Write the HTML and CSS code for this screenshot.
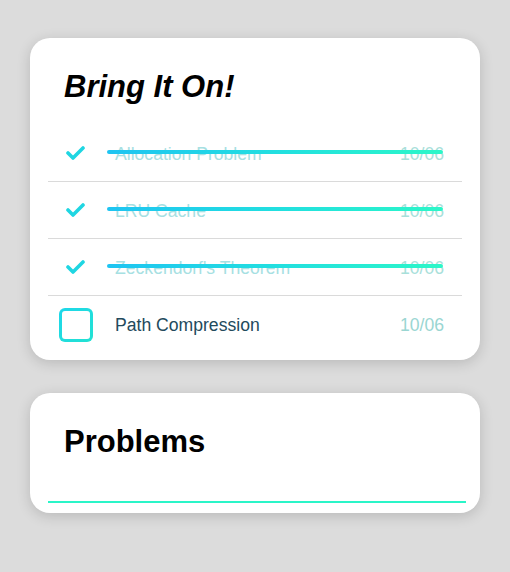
FILE: index.html
```html
<!DOCTYPE html>
<html>
<head>
<meta charset="utf-8">
<link rel="stylesheet" href="styles.css">
</head>
<body>
<div class="page">
  <section class="card todo">
    <h1 class="title">Bring It On!</h1>
    <ul class="list">
      <li class="row done">
        <span class="mark"><svg width="20" height="16" viewBox="0 0 20 16"><polyline points="2,8 7,13 17,3" fill="none" stroke="#1fd6e2" stroke-width="3.6" stroke-linecap="round" stroke-linejoin="round"/></svg></span>
        <span class="name">Allocation Problem</span>
        <span class="date">10/06</span>
        <span class="strike"></span>
      </li>
      <li class="row done">
        <span class="mark"><svg width="20" height="16" viewBox="0 0 20 16"><polyline points="2,8 7,13 17,3" fill="none" stroke="#1fd6e2" stroke-width="3.6" stroke-linecap="round" stroke-linejoin="round"/></svg></span>
        <span class="name">LRU Cache</span>
        <span class="date">10/06</span>
        <span class="strike"></span>
      </li>
      <li class="row done">
        <span class="mark"><svg width="20" height="16" viewBox="0 0 20 16"><polyline points="2,8 7,13 17,3" fill="none" stroke="#1fd6e2" stroke-width="3.6" stroke-linecap="round" stroke-linejoin="round"/></svg></span>
        <span class="name">Zeckendorf's Theorem</span>
        <span class="date">10/06</span>
        <span class="strike"></span>
      </li>
      <li class="row">
        <span class="mark"><span class="box"></span></span>
        <span class="name">Path Compression</span>
        <span class="date">10/06</span>
      </li>
    </ul>
  </section>
  <section class="card problems">
    <h2 class="heading">Problems</h2>
    <div class="underline"></div>
  </section>
</div>
</body>
</html>
```
FILE: styles.css
```css
html, body {
  margin: 0;
  padding: 0;
  background: #dcdcdc;
  font-family: "Liberation Sans", Arial, sans-serif;
}
.page {
  display: flex;
  flex-direction: column;
  gap: 33px;
  padding: 38px 30px;
}
.card {
  background: #fff;
  border-radius: 20px;
  box-shadow: 0 3px 14px rgba(0, 0, 0, 0.16);
  padding: 0 18px;
}
.todo {
  padding-top: 31px;
  padding-bottom: 7px;
}
.title {
  margin: 0 0 20px 16px;
  font-size: 31px;
  line-height: 36px;
  font-style: italic;
  font-weight: bold;
  color: #000;
}
.list {
  list-style: none;
  margin: 0;
  padding: 0;
}
.row {
  position: relative;
  display: flex;
  align-items: center;
  height: 57px;
  padding: 0 18px 0 11px;
  border-bottom: 1px solid #dadada;
  box-sizing: border-box;
}
.row:last-child {
  border-bottom: none;
}
.mark {
  width: 34px;
  height: 34px;
  display: flex;
  align-items: center;
  justify-content: center;
  flex: none;
}
.mark svg {
  display: block;
}
.box {
  width: 28px;
  height: 28px;
  border-radius: 6px;
  border: 3px solid transparent;
  background: linear-gradient(#fff, #fff) padding-box,
              linear-gradient(135deg, #1ed7ea, #22e2d2) border-box;
}
.name {
  flex: 1;
  margin-left: 22px;
  padding-top: 2px;
  font-size: 17.6px;
  color: #234a5c;
}
.date {
  padding-top: 2px;
  font-size: 17.6px;
  color: #9ad6d2;
}
.done .name {
  color: #a6e0e2;
}
.done .date {
  color: #a8e0da;
}
.strike {
  position: absolute;
  left: 59px;
  right: 19px;
  top: 50%;
  height: 4px;
  margin-top: -3px;
  border-radius: 2px;
  background: linear-gradient(90deg, #1ec4f2 0%, #22dfe0 50%, #2cf7c8 100%);
}
.problems {
  padding-top: 31px;
  padding-bottom: 10px;
}
.heading {
  margin: 0 0 41px 16px;
  font-size: 31px;
  line-height: 36px;
  font-weight: bold;
  color: #000;
}
.underline {
  height: 2px;
  margin-right: -4px;
  background: #2af5c8;
}
```
